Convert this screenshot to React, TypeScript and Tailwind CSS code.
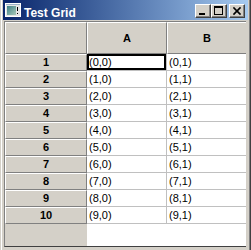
import React from "react";

const rows = Array.from({ length: 10 }, (_, i) => i);

function TitleIcon() {
  return (
    <svg width="16" height="16" viewBox="0 0 16 16" className="block">
      <defs>
        <linearGradient id="ig" x1="0" y1="0" x2="1" y2="1">
          <stop offset="0" stopColor="#3d7f86" />
          <stop offset="1" stopColor="#a9c9b8" />
        </linearGradient>
      </defs>
      <rect x="0.5" y="1.5" width="15" height="13" fill="#e6e6e6" stroke="#ffffff" />
      <rect x="1" y="2" width="14" height="1" fill="#9db3c8" />
      <rect x="2" y="4" width="9" height="9" fill="url(#ig)" />
      <rect x="12" y="5" width="1" height="4" fill="#000" />
      <rect x="12" y="11" width="1" height="1" fill="#000" />
    </svg>
  );
}

function CapButton({ kind }: { kind: "min" | "max" | "close" }) {
  return (
    <div className="w-[16px] h-[14px] bg-[#d4d0c8] border-t border-l border-t-white border-l-white border-r border-b border-r-[#404040] border-b-[#404040]">
      <div className="w-full h-full border-r border-b border-r-[#808080] border-b-[#808080]">
        <svg width="14" height="12" viewBox="0 0 14 12" className="block">
          {kind === "min" && <rect x="3" y="8" width="6" height="2" fill="#000" />}
          {kind === "max" && (
            <g fill="#000">
              <rect x="2" y="1" width="9" height="2" />
              <rect x="2" y="1" width="1" height="9" />
              <rect x="10" y="1" width="1" height="9" />
              <rect x="2" y="9" width="9" height="1" />
            </g>
          )}
          {kind === "close" && (
            <g stroke="#000" strokeWidth="1.6" strokeLinecap="square">
              <line x1="4" y1="3" x2="10" y2="9" />
              <line x1="10" y1="3" x2="4" y2="9" />
            </g>
          )}
        </svg>
      </div>
    </div>
  );
}

const label =
  "bg-[#d4d0c8] border-t border-l border-t-white border-l-white border-r border-b border-r-[#808080] border-b-[#808080] flex items-center justify-center font-bold text-[11px] text-black shrink-0";
const cell =
  "relative bg-white border-r border-b border-r-[#c0c0c0] border-b-[#c0c0c0] flex items-center pl-[2px] text-[11px] text-black shrink-0 whitespace-nowrap";

export default function App() {
  return (
    <div className="w-[251px] h-[250px] bg-[#d4d0c8] overflow-hidden flex font-['Liberation_Sans',Arial,sans-serif]">
      {/* left frame */}
      <div className="w-[3px] h-full flex shrink-0">
        <div className="w-[1px] bg-[#d4d0c8]" />
        <div className="w-[1px] bg-white" />
        <div className="w-[1px] bg-[#d4d0c8]" />
      </div>

      {/* middle */}
      <div className="w-[245px] h-full flex flex-col shrink-0">
        {/* title bar */}
        <div className="h-[20px] flex items-start bg-linear-to-r from-[#0a246a] to-[#a6caf0] pl-[2px] pr-[3px] shrink-0">
          <div className="mt-[2px]">
            <TitleIcon />
          </div>
          <span className="ml-[3px] mt-[7px] text-white font-bold text-[12px] leading-[12px] whitespace-nowrap">
            Test Grid
          </span>
          <div className="ml-auto mt-[4px] flex">
            <CapButton kind="min" />
            <CapButton kind="max" />
            <div className="w-[2px]" />
            <CapButton kind="close" />
          </div>
        </div>

        <div className="h-[1px] shrink-0" />

        {/* body */}
        <div className="flex shrink-0">
          <div className="w-[1px]" />
          <div className="w-[242px] h-[226px] border-l border-t border-b border-l-[#808080] border-t-[#808080] border-b-[#404040] overflow-hidden flex flex-col">
            {/* header */}
            <div className="flex h-[32px] shrink-0">
              <div className={`${label} w-[82px] h-[32px]`} />
              <div className={`${label} w-[80px] h-[32px]`}>A</div>
              <div className={`${label} w-[80px] h-[32px]`}>B</div>
            </div>
            {rows.map((r) => (
              <div key={r} className="flex h-[17px] shrink-0">
                <div className={`${label} w-[82px] h-[17px]`}>{r + 1}</div>
                <div className={`${cell} w-[80px] h-[17px]`}>
                  ({r},0)
                  {r === 0 && <div className="absolute inset-0 border-2 border-black" />}
                </div>
                <div className={`${cell} w-[80px] h-[17px]`}>({r},1)</div>
              </div>
            ))}
            <div className="flex flex-1">
              <div className="w-[82px] bg-[#d4d0c8] shrink-0" />
              <div className="flex-1 bg-white" />
            </div>
          </div>
          <div className="w-[2px]" />
        </div>
      </div>

      {/* right frame */}
      <div className="w-[3px] h-full flex shrink-0">
        <div className="w-[1px] bg-[#d4d0c8]" />
        <div className="w-[1px] bg-[#808080]" />
        <div className="w-[1px] bg-[#404040]" />
      </div>
    </div>
  );
}
